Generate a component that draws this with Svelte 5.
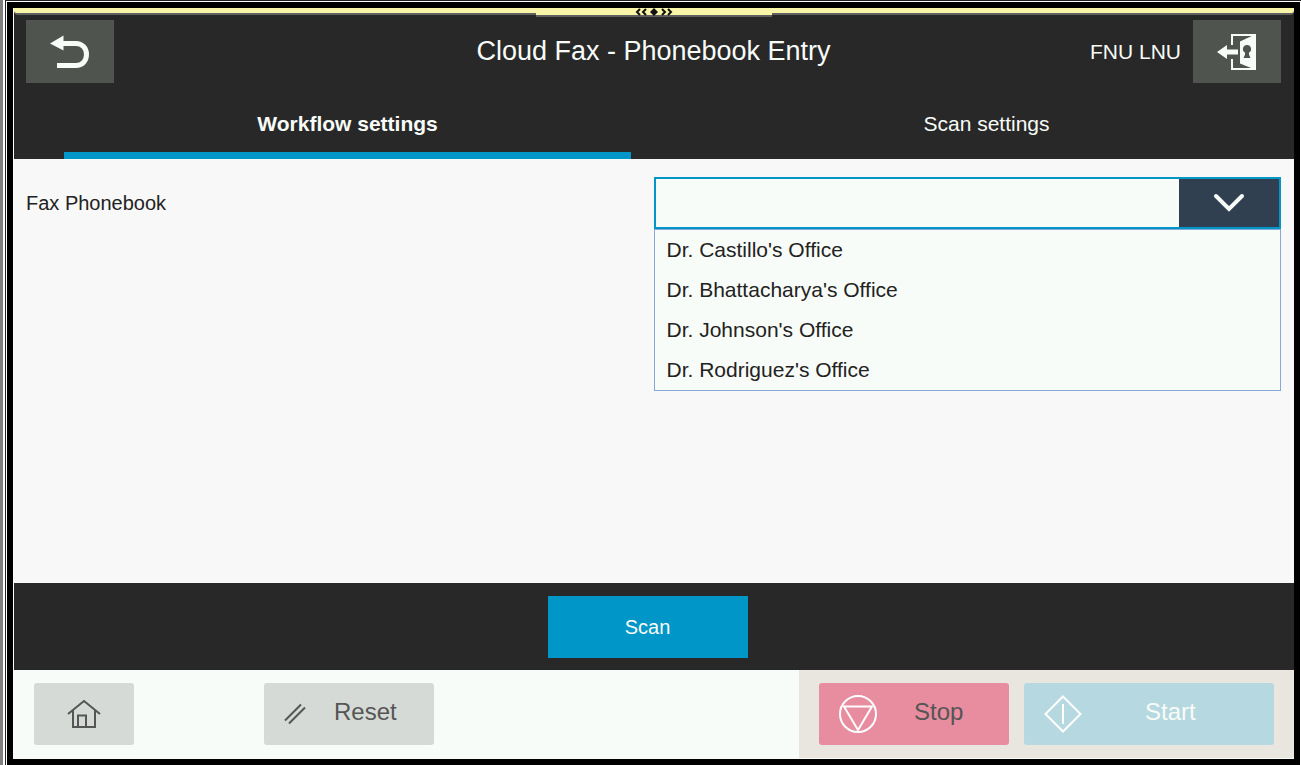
<script>
	let title = "Cloud Fax - Phonebook Entry";
	let user = "FNU LNU";
	let tabs = ["Workflow settings", "Scan settings"];
	let activeTab = 0;

	let offices = [
		"Dr. Castillo's Office",
		"Dr. Bhattacharya's Office",
		"Dr. Johnson's Office",
		"Dr. Rodriguez's Office",
	];
	let chosen = "";
	let open = true;

	const toggle = () => {
		open = !open;
	};

	const pick = (office) => {
		chosen = office;
		open = false;
	};

	const reset = () => {
		chosen = "";
		activeTab = 0;
	};
</script>

<div class="desktop">
	<div class="window">
		<div class="screen">
			<header>
				<!-- pull-down handle -->
				<div class="drawer">
					<div class="strip"></div>
					<div class="handle">
						<svg width="38" height="8" viewBox="0 0 38 8" aria-hidden="true">
							<path
								d="M5 1 2 4l3 3M11 1 8 4l3 3M27 1l3 3-3 3M33 1l3 3-3 3"
								fill="none"
								stroke="#111"
								stroke-width="2"
							/>
							<path d="M19 0l4 4-4 4-4-4z" fill="#111" />
						</svg>
					</div>
				</div>

				<div class="title-row">
					<button class="square" aria-label="Back">
						<svg width="40" height="34" viewBox="0 0 40 34" aria-hidden="true">
							<path d="M0 8.500 13.500 0.500v15z" fill="#f8fcf8" />
							<path
								d="M12 8.500h14c6 0 10.500 4.500 10.500 11s-4.500 11-10.500 11H7"
								fill="none"
								stroke="#f8fcf8"
								stroke-width="5"
							/>
						</svg>
					</button>
					<h1>{title}</h1>
					<div class="account">
						<span>{user}</span>
						<button class="square" aria-label="Sign out">
							<svg width="40" height="38" viewBox="0 0 40 38" aria-hidden="true">
								<path
									d="M15 12V2h24M15 26v10h24"
									fill="none"
									stroke="#f8fcf8"
									stroke-width="2"
								/>
								<path d="M23 8.500 39 1v36l-16-6.500z" fill="#f8fcf8" />
								<path d="M0 19 10 12v4.500h11v5H10V26z" fill="#f8fcf8" />
								<path
									d="M30 12a4 4 0 0 1 2 7.500v2l1.500 3.500h-7l1.500-3.500v-2a4 4 0 0 1 2-7.500z"
									fill="#50544f"
								/>
							</svg>
						</button>
					</div>
				</div>

				<nav>
					{#each tabs as tab, i}
						<button class:active={i === activeTab} on:click={() => (activeTab = i)}
							>{tab}</button
						>
					{/each}
				</nav>
			</header>

			<main>
				<label for="phonebook">Fax Phonebook</label>
				<div class="field">
					<div class="box">
						<select
							id="phonebook"
							bind:value={chosen}
							on:mousedown|preventDefault={toggle}
						>
							<option value=""></option>
							{#each offices as office}
								<option value={office}>{office}</option>
							{/each}
						</select>
						<button class="arrow" aria-label="Show entries" on:click={toggle}>
							<svg width="32" height="20" viewBox="0 0 32 20" aria-hidden="true">
								<path
									d="M3 3l13 13L29 3"
									fill="none"
									stroke="#f8fcf8"
									stroke-width="4"
									stroke-linecap="round"
								/>
							</svg>
						</button>
					</div>
					{#if open}
						<div class="list">
							{#each offices as office}
								<button on:click={() => pick(office)}>{office}</button>
							{/each}
						</div>
					{/if}
				</div>
			</main>

			<div class="actions">
				<button class="scan">Scan</button>
			</div>

			<footer>
				<div class="left">
					<button class="home" aria-label="Home">
						<svg width="34" height="30" viewBox="0 0 34 30" aria-hidden="true">
							<path
								d="M1 15 17 2l16 13M6 11v17h22V11M11 28V16.500h8V28"
								fill="none"
								stroke="#555"
								stroke-width="2"
							/>
						</svg>
					</button>
					<button class="reset" on:click={reset}>
						<svg width="22" height="22" viewBox="0 0 22 22" aria-hidden="true">
							<path
								d="M1 17.500 17 1.500M5 20.500 21 4.500"
								fill="none"
								stroke="#555"
								stroke-width="2"
							/>
						</svg>
						<span>Reset</span>
					</button>
				</div>
				<div class="right">
					<button class="stop">
						<svg width="38" height="38" viewBox="0 0 38 38" aria-hidden="true">
							<g fill="none" stroke="#fff" stroke-width="2">
								<circle cx="19" cy="19" r="18" />
								<path d="M5 11.500h28L19 35z" />
							</g>
						</svg>
						<span>Stop</span>
					</button>
					<button class="start">
						<svg width="38" height="38" viewBox="0 0 38 38" aria-hidden="true">
							<path
								d="M19 1.500 36.500 19 19 36.500 1.500 19zM19 9v20"
								fill="none"
								stroke="#fff"
								stroke-width="2"
							/>
						</svg>
						<span>Start</span>
					</button>
				</div>
			</footer>
		</div>
	</div>
</div>

<style>
	:global(body) {
		background: #fff;
	}

	.desktop,
	.desktop * {
		box-sizing: border-box;
	}

	.desktop {
		display: flex;
		min-height: 100vh;
		padding-left: 2px;
		border-left: 3px solid #808080;
		background: #fff;
		font-family: "Liberation Sans", Arial, sans-serif;
		font-size: 20px;
		color: #222;
	}

	.window {
		flex: 1;
		display: flex;
		padding: 1px 1px 0 1px;
		border-top: 1px solid #222;
		border-left: 1px solid #222;
	}

	.screen {
		flex: 1;
		display: flex;
		flex-direction: column;
		padding-left: 1px;
		border: 6px solid #000;
	}

	button {
		margin: 0;
		padding: 0;
		border: none;
		background: none;
		font: inherit;
		color: inherit;
		cursor: pointer;
	}

	svg {
		display: block;
	}

	header {
		background: #282828;
		color: #f8fcf8;
	}

	.drawer {
		height: 12px;
	}

	.strip {
		height: 7px;
		background: #f8f4a8;
		border-bottom: 2px solid #606060;
		border-radius: 0 0 4px 4px;
	}

	.handle {
		position: relative;
		display: flex;
		justify-content: center;
		width: 236px;
		height: 9px;
		margin: -7px auto 0;
		background: #f8f4a8;
		border-bottom: 2px solid #606060;
	}

	.title-row {
		display: grid;
		grid-template-columns: 1fr auto 1fr;
		align-items: center;
		padding: 0 13px 0 12px;
	}

	.square {
		display: flex;
		align-items: center;
		justify-content: center;
		width: 88px;
		height: 63px;
		background: #50544f;
	}

	h1 {
		margin: 0;
		font-size: 27px;
		font-weight: normal;
	}

	.account {
		display: flex;
		align-items: center;
		justify-content: flex-end;
		gap: 12px;
		font-size: 21px;
	}

	nav {
		display: flex;
		gap: 72px;
		margin-top: 5px;
		padding: 0 24px 0 50px;
		font-size: 21px;
	}

	nav button {
		flex: 1;
		height: 71px;
		border-top: 7px solid transparent;
		border-bottom: 7px solid transparent;
	}

	nav button.active {
		border-bottom-color: #0096c8;
		font-weight: bold;
	}

	main {
		flex: 1;
		display: grid;
		grid-template-columns: 1fr 1fr;
		align-items: start;
		min-height: 260px;
		padding: 18px 13px 18px 12px;
		background: #f8f8f8;
	}

	label {
		line-height: 52px;
	}

	.field {
		position: relative;
		font-size: 21px;
	}

	.box {
		display: flex;
		height: 52px;
		border: 2px solid #0096c8;
		background: #f8fcf8;
	}

	select {
		flex: 1;
		padding: 0 10px;
		border: none;
		outline: none;
		appearance: none;
		background: none;
		font: inherit;
		color: inherit;
	}

	.arrow {
		display: flex;
		align-items: center;
		justify-content: center;
		width: 100px;
		background: #304050;
	}

	.list {
		position: absolute;
		top: 100%;
		left: 0;
		right: 0;
		border: 1px solid #88a8d8;
		background: #f8fcf8;
	}

	.list button {
		display: block;
		width: 100%;
		height: 40px;
		padding: 0 12px;
		text-align: left;
	}

	.actions {
		display: flex;
		justify-content: center;
		padding: 13px 13px 12px 0;
		background: #282828;
	}

	.scan {
		width: 200px;
		height: 62px;
		background: #0096c8;
		color: #f8fcf8;
	}

	footer {
		display: flex;
		border-bottom: 1px solid #f8fcf8;
		background: #f8fcf8;
		font-size: 24px;
		color: #555;
	}

	.left {
		flex: 1;
		display: flex;
		gap: 130px;
		padding: 13px 20px;
	}

	.right {
		display: flex;
		gap: 15px;
		padding: 13px 20px;
		background: #e8e6df;
	}

	footer button {
		display: flex;
		align-items: center;
		height: 62px;
		border-radius: 3px;
	}

	footer span {
		padding-bottom: 4px;
	}

	.home,
	.reset {
		background: #d6dad6;
	}

	.home {
		justify-content: center;
		width: 100px;
	}

	.reset {
		gap: 28px;
		width: 170px;
		padding-left: 20px;
	}

	.stop {
		gap: 37px;
		width: 190px;
		padding-left: 20px;
		background: #e88ca0;
	}

	.start {
		gap: 63px;
		width: 250px;
		padding-left: 20px;
		background: #b6d8e0;
		color: #f8fcf8;
	}
</style>
